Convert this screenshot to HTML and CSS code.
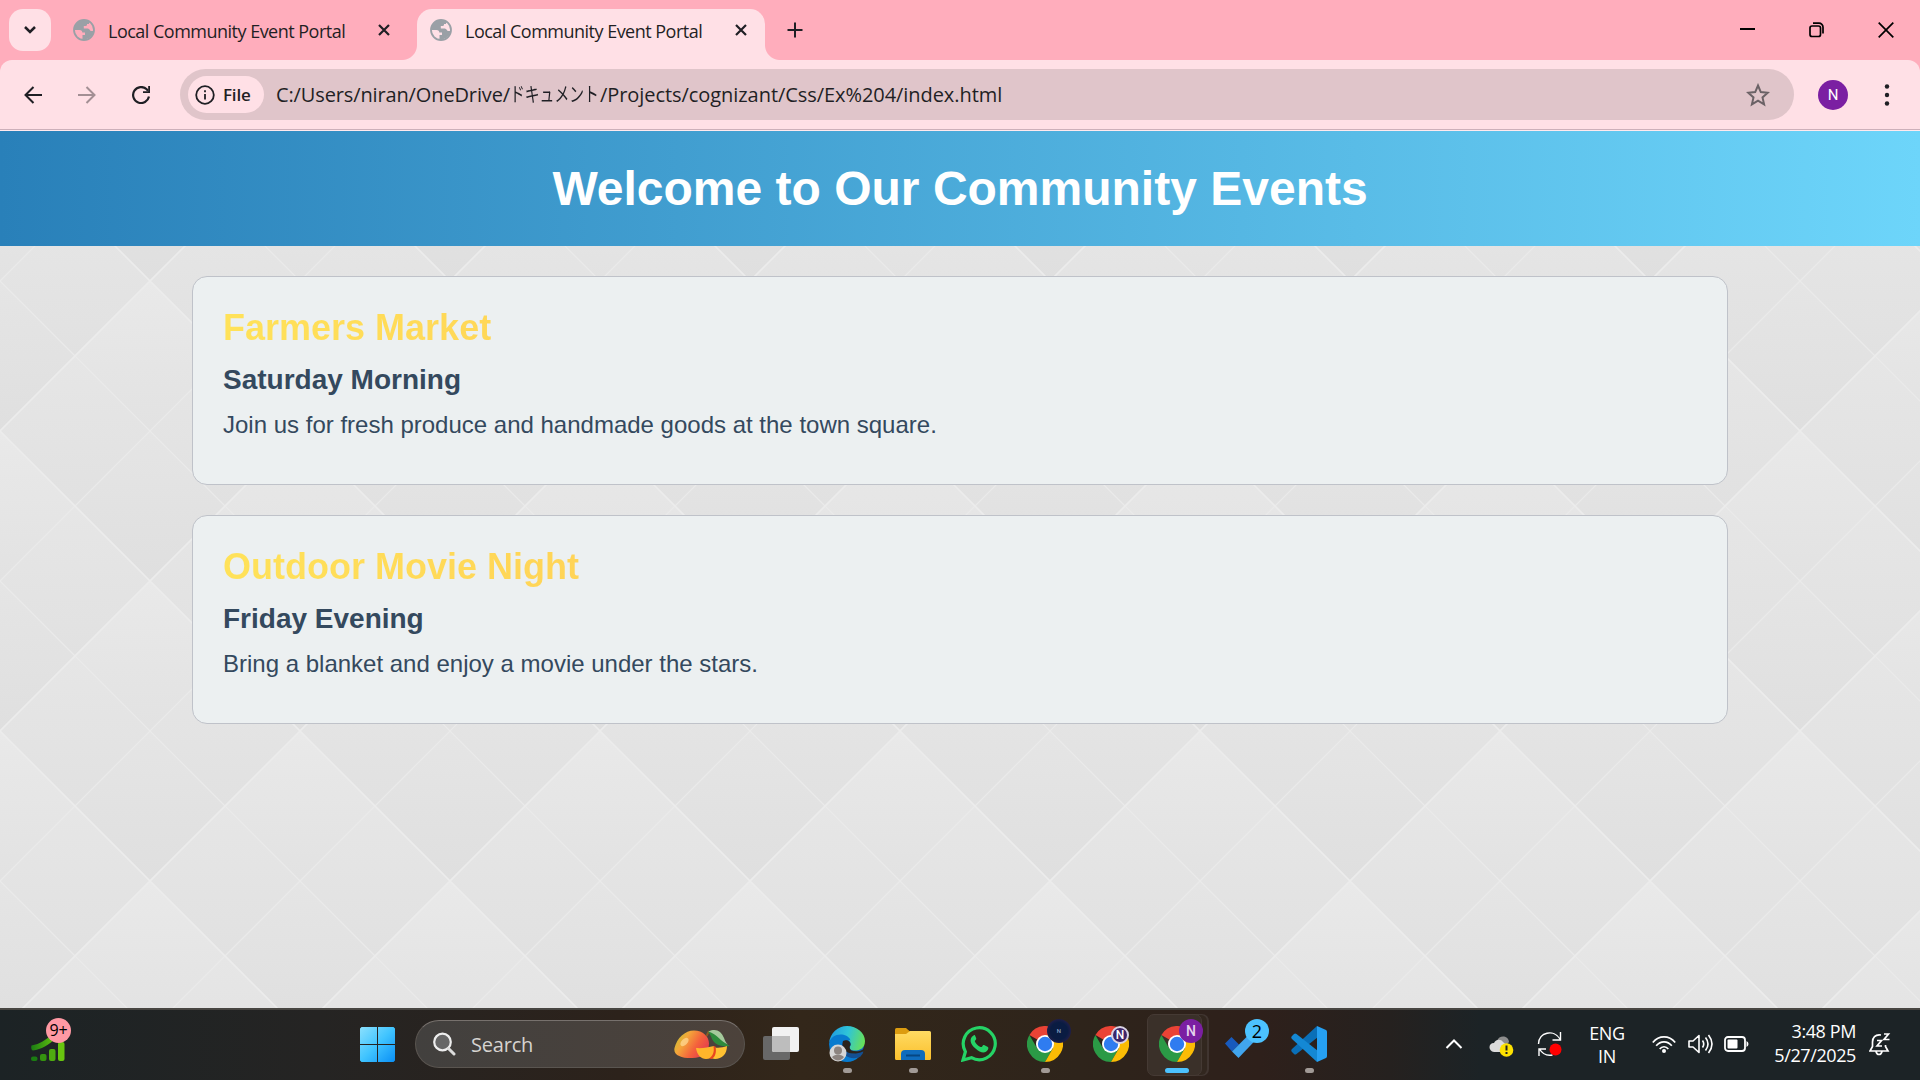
FILE: index.html
```html
<!DOCTYPE html>
<html lang="en">
<head>
<meta charset="utf-8">
<title>Local Community Event Portal</title>
<link rel="stylesheet" href="styles.css">
</head>
<body>
<svg class="defs" width="0" height="0" aria-hidden="true">
  <defs>
    <linearGradient id="win" x1="0" y1="0" x2="1" y2="1"><stop offset="0" stop-color="#8be0fd"/><stop offset=".5" stop-color="#40c4ff"/><stop offset="1" stop-color="#0a8ff5"/></linearGradient>
    <linearGradient id="bars" x1="0" x2="1"><stop offset="0" stop-color="#1b7d12"/><stop offset="1" stop-color="#66c410"/></linearGradient>
    <linearGradient id="mango" x1="0" y1=".2" x2="1" y2=".7"><stop offset="0" stop-color="#c2c133"/><stop offset=".3" stop-color="#f3a63a"/><stop offset=".65" stop-color="#f4603c"/><stop offset="1" stop-color="#e23a50"/></linearGradient>
    <linearGradient id="edgeTop" x1="0" y1=".3" x2="1" y2=".5"><stop offset="0" stop-color="#1f9ae0"/><stop offset=".5" stop-color="#2fc4d8"/><stop offset="1" stop-color="#67e05a"/></linearGradient>
    <linearGradient id="folder" x1="0" y1="0" x2="0" y2="1"><stop offset="0" stop-color="#ffdb63"/><stop offset="1" stop-color="#fbc02d"/></linearGradient>
    <symbol id="globe" viewBox="0 0 22 22">
      <circle cx="11" cy="11" r="10" fill="none" stroke="#9aa0a6" stroke-width="1.8"/>
      <path d="M13 1.5C7 .5 1.5 5 1.2 11h5.3c2 0 2.800 1 2.800 2.500H12V16H9.500v4.300C15 21 20 17 20.500 12h-2.700c-1 0-1-2.500-3-2.500h-4V7h1.700c1.500 0 1.500-1 1.500-2H16V2.500z" fill="#9aa0a6"/>
    </symbol>
    <symbol id="cross" viewBox="0 0 12 12"><path d="M1 1l10 10M11 1L1 11" fill="none" stroke="#1f1f24" stroke-width="2.200"/></symbol>
    <symbol id="chrome" viewBox="0 0 36 36">
      <path d="M18 18L2.400 9A18 18 0 0 1 33.600 9z" fill="#ea4335"/>
      <path d="M2.400 9A18 18 0 0 0 18 36l7.800-13.500L18 18 10.200 22.500z" fill="#2b9a46"/>
      <path d="M33.600 9A18 18 0 0 1 18 36l7.800-13.500L18 9z" fill="#fbbc05"/>
      <circle cx="18" cy="18" r="9" fill="#fff"/><circle cx="18" cy="18" r="7.200" fill="#2f7cf0"/>
    </symbol>
  </defs>
</svg>

<header class="tabstrip">
  <button class="tab-search"><svg width="14" height="10" viewBox="0 0 14 10"><path d="M2 2l5 5 5-5" fill="none" stroke="#1f1f24" stroke-width="2.500"/></svg></button>
  <div class="tab tab-first">
    <svg class="favicon"><use href="#globe"/></svg><span class="tab-title">Local Community Event Portal</span><svg class="tab-close"><use href="#cross"/></svg>
  </div>
  <div class="tab tab-active">
    <svg class="favicon"><use href="#globe"/></svg><span class="tab-title">Local Community Event Portal</span><svg class="tab-close"><use href="#cross"/></svg>
  </div>
  <svg class="new-tab" viewBox="0 0 16 16"><path d="M8 .5v15M.5 8h15" stroke="#1f1f24" stroke-width="2"/></svg>
  <div class="window-controls">
    <svg width="15" height="16" viewBox="0 0 15 16"><path d="M0 7h15" stroke="#000" stroke-width="2"/></svg>
    <svg width="15" height="16" viewBox="0 0 15 16"><rect x="1" y="4" width="10.500" height="10.500" rx="2" fill="none" stroke="#000" stroke-width="1.700"/><path d="M4 1.200h6a4 4 0 0 1 4 4v6.300" fill="none" stroke="#000" stroke-width="1.700"/></svg>
    <svg width="16" height="16" viewBox="0 0 16 16"><path d="M.7.7l14.600 14.600M15.300.7L.7 15.300" stroke="#000" stroke-width="1.700"/></svg>
  </div>
</header>

<div class="toolbar-back">
<nav class="toolbar">
  <div class="nav-buttons">
    <svg width="18" height="18" viewBox="0 0 18 18"><path d="M18 9H2M9.500 1L1.500 9l8 8" fill="none" stroke="#1f1f24" stroke-width="2"/></svg>
    <svg width="18" height="18" viewBox="0 0 18 18"><path d="M0 9h16M8.500 1l8 8-8 8" fill="none" stroke="#a38f94" stroke-width="2"/></svg>
    <svg width="18" height="18" viewBox="0 0 18 18"><path d="M17 10.500A8 8 0 1 1 14.700 3.300L16 4.700" fill="none" stroke="#1f1f24" stroke-width="2.200"/><path d="M18 0v7h-7V5.200h5.200V0z" fill="#1f1f24"/></svg>
  </div>
  <div class="omnibox">
    <div class="chip"><svg width="20" height="20" viewBox="0 0 20 20"><circle cx="10" cy="10" r="8.800" fill="none" stroke="#1f1f24" stroke-width="1.800"/><path d="M10 9v5.500M10 5.300v2" stroke="#1f1f24" stroke-width="1.800"/></svg><span>File</span></div>
    <div class="url"><span class="url-a">C:/Users/niran/OneDrive/</span><span class="kana"><span>ドキュメント</span></span><span class="url-b">/Projects/cognizant/Css/Ex%204/index.html</span></div>
    <svg class="star" width="24" height="24" viewBox="0 0 24 24"><path d="M12 2.500l2.800 6.600 7 .6-5.300 4.700 1.600 7L12 17.700l-6.100 3.700 1.600-7L2.200 9.700l7-.6z" fill="none" stroke="#6b6266" stroke-width="2"/></svg>
  </div>
  <span class="avatar">N</span>
  <svg class="menu" width="6" height="24" viewBox="0 0 6 24"><g fill="#1f1f24"><circle cx="3" cy="3.500" r="2.200"/><circle cx="3" cy="12" r="2.200"/><circle cx="3" cy="20.500" r="2.200"/></g></svg>
</nav>
</div>

<main class="page">
  <div class="banner"><h1>Welcome to Our Community Events</h1></div>
  <div class="events">
    <section class="card">
      <h2>Farmers Market</h2>
      <h3>Saturday Morning</h3>
      <p>Join us for fresh produce and handmade goods at the town square.</p>
    </section>
    <section class="card">
      <h2>Outdoor Movie Night</h2>
      <h3>Friday Evening</h3>
      <p>Bring a blanket and enjoy a movie under the stars.</p>
    </section>
  </div>
</main>

<footer class="taskbar">
  <div class="widget">
    <svg width="36" height="44" viewBox="0 0 36 44"><g fill="url(#bars)"><path d="M.5 27.500C9 26 15 22 20 17l5 3C18 27 10 31.500 2 32.500 0 32 0 28.500.5 27.500z"/><rect x="0" y="38.500" width="6.500" height="4.500" rx="2" fill="#1b7d12"/><rect x="9" y="36" width="6.500" height="7" rx="2" fill="#35930f"/><rect x="18" y="31" width="6.500" height="12" rx="2" fill="#4fab10"/><rect x="27" y="24" width="6.500" height="19" rx="2" fill="#68c50f"/></g></svg>
    <span class="count">9+</span>
  </div>
  <div class="apps">
    <svg class="start" width="35" height="35" viewBox="0 0 35 35"><path d="M1.500 0H17v17H0V1.500zM18 0h15.500L35 1.500V17H18zM0 18h17v17H1.500L0 33.500zM18 18h17v15.500L33.500 35H18z" fill="url(#win)"/></svg>
    <div class="search">
      <svg width="23" height="24" viewBox="0 0 23 24"><circle cx="9.500" cy="10" r="8.300" fill="#666" stroke="#eee" stroke-width="2.200"/><path d="M15.500 16.500l5.500 5.500" stroke="#ddd" stroke-width="3" stroke-linecap="round"/></svg>
      <span>Search</span>
      <svg class="mango" width="56" height="32" viewBox="0 0 56 32"><path d="M.5 19C3 9 11 1.500 20 1.500c9 0 15 6 15 13C35 24 28 29.500 17 29 7 29-1 26 .5 19z" fill="url(#mango)"/><ellipse cx="10.500" cy="13" rx="5" ry="3" transform="rotate(-45 10.500 13)" fill="#ffdc9a" opacity=".7"/><path d="M32.500 7l2.500-5" stroke="#8a5b25" stroke-width="2"/><path d="M34 3c9-4 14 1 16 7 1 4 3 6 6 7-9 1-15-1-18-7-1-3-2-5-4-7z" fill="#2e8b3c"/><path d="M34.500 2.500C42-1 47 2 50 9c1 3 2 5 4 6.500C47 13 43 5 34.500 2.500z" fill="#a5c99c"/><path d="M22 19c6 .5 12-.5 18-2 2 7-1 13-8 13-5 0-9-4-10-11z" fill="#ffb52b"/><path d="M41 18.500c4 .5 8 0 12-1.500 0 8-5 13-12 13l-5-1c4-3 5-6 5-10.500z" fill="#ffc132"/><path d="M39.500 17c1 6-.5 10-4.500 12.500l3 .5c4-3 4.500-8 3.500-12.500z" fill="#e9471f"/></svg>
    </div>
    <svg width="36" height="36" viewBox="0 0 36 36"><rect x="0" y="10" width="27" height="24" rx="2" fill="#686868"/><rect x="9" y="1" width="27" height="25" rx="2" fill="#f2f2f2"/><path d="M9 10h18v16H11q-2 0-2-2z" fill="#bdbdbd"/></svg>
    <div class="app running">
      <svg width="36" height="36" viewBox="0 0 36 36"><circle cx="18" cy="18" r="17" fill="#0d67ba"/><path d="M0 17C1 7 9 0 18 0c10 0 18 7 18 15 0 7-5 9.500-10 9.500-5 0-6-2-5-4 2-3 0-6-4-8C9 9 2 12 0 17z" fill="url(#edgeTop)"/><path d="M0 18C1 11 7 8 13 8.500c4 .5 8 3 8.500 6-6-2-10 3-8 9C16 31 24 32 30 31 21 40 6 36 1 25z" fill="#087bcf"/><path d="M15 15c-4 7 2 15 12 12 3-.7 6-2.500 7-2 1 1-1 4-3 6-8 3-17 0-18-8 0-3 0-6 2-8z" fill="#144f91"/><path d="M14 15c3-2 8 0 7.500 4-1.500 2-1 4 1 5.500 4 1.500 9 1 13-2l-1.500 3c-9 4-18 2-20-4-.7-2.500-.5-5 0-6.500z" fill="#2b231b"/><circle cx="9" cy="27" r="8.500" fill="#d6d6d6"/><circle cx="9" cy="24.500" r="4" fill="#8c8480"/><path d="M3 31c3-3.500 9-3.500 12 0-3 4.500-9 4.500-12 0z" fill="#8c8480"/></svg>
    </div>
    <div class="app running">
      <svg width="36" height="36" viewBox="0 0 36 36"><path d="M0 3.500Q0 2 1.500 2H11l4 3.500V9H0z" fill="#dc9c10"/><path d="M0 8h11l4-3h19.500Q36 5 36 6.500v26q0 1.500-1.500 1.500h-33Q0 34 0 32.500z" fill="url(#folder)"/><path d="M6 34v-6q0-4 4-4h16q4 0 4 4v6z" fill="#0f6cbd"/><path d="M11 29.500h14" stroke="#064682" stroke-width="2"/></svg>
    </div>
    <div class="app">
      <svg width="36" height="36" viewBox="0 0 36 36"><path d="M2 34l2.400-8.300A16 16 0 1 1 10.500 31.700z" fill="none" stroke="#25d366" stroke-width="3.200"/><path d="M12.500 9.500c-5 3-3 9 2 13 5 4.500 10 5.500 12.500 1 .7-1.500.4-2.300-.5-2.800l-3-1.500c-1-.4-1.500 0-2.300 1.300-.6.800-1.200.7-2.200.2-2.400-1.300-4-3-5-5-.3-.7 0-1 .6-1.700.8-1 .8-1.500.4-2.300l-1-2.200c-.4-.7-1-.6-1.500 0z" fill="#25d366"/></svg>
    </div>
    <div class="app running"><svg width="36" height="36"><use href="#chrome"/></svg><i class="badge badge-dark">N</i></div>
    <div class="app"><svg width="36" height="36"><use href="#chrome"/></svg><i class="badge badge-ring">N</i></div>
    <div class="app current"><svg width="36" height="36"><use href="#chrome"/></svg><i class="badge badge-purple">N</i></div>
    <div class="app">
      <svg width="36" height="36" viewBox="0 0 36 36"><path d="M0 17.500L6.500 11l7.500 7.500-7 7z" fill="#185abd"/><path d="M7 25.500L29 3.500l6 6L13.500 32z" fill="#41a5ee"/></svg><i class="badge badge-num">2</i>
    </div>
    <div class="app running">
      <svg width="36" height="36" viewBox="0 0 36 36"><path d="M26 0L1 23q-1.500 1.500 0 3l2 2q1 1 2.500 0L27 11z" fill="#0a6fb8"/><path d="M26 36L1 13q-1.500-1.500 0-3l2-2q1-1 2.500 0L27 25z" fill="#1488d4"/><path d="M26 0l9 4q1 .5 1 2v24q0 1.500-1 2l-9 4z" fill="#26a0f2"/></svg>
    </div>
  </div>
  <div class="tray">
    <svg class="chev" width="18" height="12" viewBox="0 0 18 12"><path d="M1.500 10L9 2.500l7.500 7.500" fill="none" stroke="#fff" stroke-width="2"/></svg>
    <svg class="cloud" width="26" height="24" viewBox="0 0 26 24"><path d="M8 8C10 2 19 2 20 9l-5 6z" fill="#8d8d8d"/><path d="M5 19c-6-1-6-9 0-9 2-4 7-4 9-1l5 4-6 6z" fill="#dcdcdc"/><circle cx="17.500" cy="17" r="6.800" fill="#fde100"/><path d="M17.500 12.500v5M17.500 19v2" stroke="#222" stroke-width="2"/></svg>
    <svg class="sync" width="26" height="26" viewBox="0 0 26 26"><path d="M1.500 13C1.500 1 17 -2 23 8M23.500 1v8h-8M2 25v-7h7M2.500 18c3 5 8 7 13 6" fill="none" stroke="#fff" stroke-width="1.400"/><circle cx="18.500" cy="18.500" r="6" fill="#f00"/></svg>
    <div class="lang"><span>ENG</span><span>IN</span></div>
    <svg class="wifi" width="24" height="19" viewBox="0 0 24 19"><g fill="none" stroke="#fff" stroke-width="1.700"><path d="M.8 7.500C7 0 17 0 23.200 7.500M4.200 10.800c4.300-5.300 11.300-5.300 15.600 0M7.700 14c2.300-3 6.300-3 8.600 0"/></g><circle cx="12" cy="16" r="2" fill="#fff"/></svg>
    <svg class="volume" width="25" height="20" viewBox="0 0 25 20"><g fill="none" stroke="#fff" stroke-width="1.600" stroke-linejoin="round"><path d="M1 7v6h4l6 5.500V1.500L5 7zM14.500 6.500q2.500 3.500 0 7M17.500 3.500q5 6.500 0 13M20.500 1q7 9 0 18"/></g></svg>
    <svg class="battery" width="25" height="16" viewBox="0 0 25 16"><rect x="1" y="1" width="20" height="14" rx="3" fill="none" stroke="#fff" stroke-width="1.800"/><rect x="3.500" y="3.500" width="10" height="9" rx="1" fill="#fff"/><path d="M22.500 5v6q2-1 2-3t-2-3z" fill="#fff"/></svg>
    <div class="clock"><span>3:48 PM</span><span>5/27/2025</span></div>
    <svg class="bell" width="22" height="24" viewBox="0 0 22 24"><g fill="none" stroke="#fff" stroke-width="1.700"><path d="M12 3C6 2 3.500 6 3.500 10v4.500L1 19h18l-2.500-4.500V13M7 19.500c1 4 5 4 6 0"/><path d="M8 8.500h4.500L8 14h5M15 2h4.500L15 7.500h5.500"/></g></svg>
  </div>
</footer>
</body>
</html>
```
FILE: styles.css
```css
* { box-sizing: border-box; }
body {
  margin: 0;
  width: 1920px;
  height: 1080px;
  overflow: hidden;
  display: flex;
  flex-direction: column;
  font-family: "Open Sans", "Noto Sans CJK JP", sans-serif;
  color: #1f1f24;
}
svg { display: block; flex: none; }
.defs { position: absolute; }

/* Tab strip */
.tabstrip {
  height: 60px;
  flex: none;
  display: flex;
  align-items: flex-start;
  background: #ffadbc;
  padding: 9px 26px 0 9px;
}
.tab-search {
  width: 42px;
  height: 42px;
  border: 0;
  padding: 0;
  border-radius: 14px;
  background: #ffe0e6;
  display: grid;
  place-items: center;
}
.tab { height: 51px; display: flex; align-items: flex-start; padding-top: 10px; flex: none; }
.tab-first { width: 366px; padding-left: 22px; }
.tab-active {
  position: relative;
  width: 348px;
  padding-left: 13px;
  background: #ffe0e6;
  border-radius: 15px 15px 0 0;
}
.tab-active::before, .tab-active::after {
  content: "";
  position: absolute;
  bottom: 0;
  width: 15px;
  height: 15px;
}
.tab-active::before { right: 100%; background: radial-gradient(circle at 0 0, #ffadbc 14.500px, #ffe0e6 15.500px); }
.tab-active::after { left: 100%; background: radial-gradient(circle at 100% 0, #ffadbc 14.500px, #ffe0e6 15.500px); }
.favicon { width: 22px; height: 22px; }
.tab-title {
  width: 270px;
  margin-left: 13px;
  line-height: 24px;
  font-size: 18px;
  letter-spacing: -.51px;
  white-space: nowrap;
}
.tab-close { width: 12px; height: 12px; margin-top: 5px; }
.new-tab { width: 16px; height: 16px; margin: 13px 0 0 22px; }
.window-controls { display: flex; gap: 54px; margin: 13px 0 0 auto; }

/* Toolbar */
.toolbar-back { background: #ffadbc; flex: none; }
.toolbar {
  height: 71px;
  display: flex;
  align-items: center;
  padding: 0 0 2px 24px;
  background: linear-gradient(#ffe0e6 69px, #cdb0ba 69px, #cdb0ba 70px, #ffe9ee 70px);
  border-radius: 12px 12px 0 0;
}
.nav-buttons { display: flex; gap: 36px; width: 156px; flex: none; }
.omnibox {
  width: 1614px;
  height: 51px;
  flex: none;
  border-radius: 26px;
  background: #e0c5ca;
  display: flex;
  align-items: center;
  padding: 0 24px 0 8px;
}
.chip {
  width: 76px;
  height: 37px;
  border-radius: 19px;
  background: #ffe0e6;
  display: flex;
  align-items: center;
  gap: 8px;
  padding-left: 7px;
  font-size: 17px;
  font-weight: 600;
  letter-spacing: -.2px;
}
.url { display: flex; margin-left: 12px; font-size: 20px; line-height: 28px; white-space: nowrap; }
.url-a { letter-spacing: -.13px; }
.url-b { letter-spacing: -.06px; }
.kana { width: 90px; }
.kana span { display: inline-block; transform: scaleX(.74); transform-origin: 0 50%; }
.star { margin-left: auto; }
.avatar {
  width: 30px;
  height: 30px;
  flex: none;
  margin: 0 36px 0 24px;
  border-radius: 50%;
  background: #7b1fa2;
  color: #fff;
  font: 15px/30px Roboto, sans-serif;
  text-align: center;
}

/* Web page */
.page {
  height: 877px;
  flex: none;
  font-family: "Liberation Sans", Arial, sans-serif;
  background: #e4e4e4 url("data:image/svg+xml,%3Csvg xmlns='http://www.w3.org/2000/svg' xmlns:xlink='http://www.w3.org/1999/xlink' width='300' height='300'%3E%3Cdefs%3E%3ClinearGradient id='a' x2='0' y2='1'%3E%3Cstop offset='0' stop-color='%23e9e9e9'/%3E%3Cstop offset='1' stop-color='%23e2e2e2'/%3E%3C/linearGradient%3E%3ClinearGradient id='b' x2='0' y2='1'%3E%3Cstop offset='0' stop-color='%23e6e6e6'/%3E%3Cstop offset='1' stop-color='%23e1e1e1'/%3E%3C/linearGradient%3E%3ClinearGradient id='c' x2='0' y2='1'%3E%3Cstop offset='0' stop-color='%23e5e5e5'/%3E%3Cstop offset='1' stop-color='%23dfdfdf'/%3E%3C/linearGradient%3E%3Cpath id='s' d='M0 0L75 75 0 150-75 75z'/%3E%3Cg id='d'%3E%3Cuse xlink:href='%23s' fill='url(%23a)'/%3E%3Cuse xlink:href='%23s' x='-75' y='75' fill='url(%23b)'/%3E%3Cuse xlink:href='%23s' x='75' y='75' fill='url(%23b)'/%3E%3Cuse xlink:href='%23s' y='150' fill='url(%23c)'/%3E%3C/g%3E%3C/defs%3E%3Cuse xlink:href='%23d'/%3E%3Cuse xlink:href='%23d' x='300'/%3E%3Cuse xlink:href='%23d' x='150' y='-150'/%3E%3Cuse xlink:href='%23d' x='150' y='150'/%3E%3Cg fill='none'%3E%3Cpath d='M75-75L375 225M-75 75L225 375M-75 225L225-75M75 375L375 75' stroke='%23eaeaea' stroke-width='1.3'/%3E%3Cpath d='M-9-9L309 309M309-9L-9 309' stroke='%23ececec' stroke-width='1.6'/%3E%3C/g%3E%3C/svg%3E");
}
.banner {
  height: 115px;
  display: flex;
  justify-content: center;
  padding-top: 30px;
  background: linear-gradient(90deg, #2980b9, #6dd5fa);
}
h1, h2, h3, p { margin: 0; }
h1 { font-size: 48px; line-height: 55px; color: #fff; }
.events { width: 80%; margin: 30px auto 0; display: flex; flex-direction: column; gap: 30px; }
.card {
  height: 209px;
  padding: 30px;
  border: 1px solid #bfc2c9;
  border-radius: 15px;
  background: rgba(236, 240, 241, .95);
  color: #34495e;
}
h2 {
  font-size: 36px;
  line-height: 41px;
  background: linear-gradient(90deg, #ffe259, #ffa751);
  background-clip: text;
  -webkit-background-clip: text;
  color: transparent;
}
h3 { font-size: 28px; line-height: 32px; margin-top: 16px; }
p { font-size: 24px; line-height: 28px; margin-top: 15px; }

/* Taskbar */
.taskbar {
  height: 72px;
  flex: none;
  display: flex;
  border-top: 2px solid #484642;
  background: linear-gradient(90deg, #1c2325 0, #252423 320px, #2c221b 620px, #33271a 800px, #2e241b 1080px, #2e201b 1260px, #25211f 1390px, #1c2326 1480px);
  color: #fff;
}
.widget { position: relative; width: 360px; padding: 8px 0 0 31px; }
.count {
  position: absolute;
  left: 46px;
  top: 8px;
  width: 25px;
  height: 25px;
  border-radius: 50%;
  background: #ff99a4;
  color: #000;
  font-size: 16px;
  line-height: 24px;
  text-align: center;
  letter-spacing: -.2px;
}
.apps { display: flex; gap: 30px; padding-top: 16px; }
.start { margin: 1px -10px 0 0; }
.search {
  width: 330px;
  height: 48px;
  margin: -6px -12px 0 0;
  border-radius: 24px;
  border: 1px solid #5a5550;
  border-top-color: #77716d;
  background: linear-gradient(90deg, #42403e, #4c423b);
  display: flex;
  align-items: center;
  padding: 0 14px 0 17px;
  font-size: 20px;
  letter-spacing: -.2px;
  color: #d6d3d0;
}
.search span { margin-left: 15px; }
.mango { margin-left: auto; margin-top: 2px; }
.app { position: relative; width: 36px; height: 36px; }
.app > svg { position: relative; }
.running::after, .current::after {
  content: "";
  position: absolute;
  left: 14px;
  top: 42px;
  width: 9px;
  height: 5px;
  border-radius: 3px;
  background: #a19a96;
}
.current::after { left: 6px; width: 24px; background: #4cc2ff; }
.current::before {
  content: "";
  position: absolute;
  left: -12px;
  top: -12px;
  width: 53px;
  height: 60px;
  border-radius: 7px;
  border: 1px solid #453a34;
  background: #3a3029;
  box-shadow: 6px 0 0 -1px #32271f, 7px 0 0 0 #403530;
}
.badge {
  position: absolute;
  width: 24px;
  height: 24px;
  border-radius: 50%;
  left: 20px;
  top: -7px;
  font: 500 14px/24px Roboto, sans-serif;
  text-align: center;
}
.badge-dark { background: radial-gradient(circle, #0a1c42 50%, #33204f 90%); font-size: 6px; color: #8ca3c2; }
.badge-ring { left: 18px; top: 0; width: 18px; height: 18px; border: 2px solid #d9d3e4; background: #3c2569; font-size: 12px; line-height: 14px; }
.badge-purple { background: #7b1fa2; color: #e6d3ee; }
.badge-num { background: #4cc2ff; color: #000; font: 18px/24px "Open Sans", sans-serif; }

/* System tray */
.tray { display: flex; margin-left: auto; align-items: flex-start; padding-right: 29px; }
.chev { margin: 28px 26px 0 0; }
.cloud { margin: 23px 22px 0 0; }
.sync { margin: 21px 21px 0 0; }
.lang, .clock { display: flex; flex-direction: column; font-size: 18px; line-height: 24px; letter-spacing: -.4px; white-space: nowrap; }
.lang { width: 46px; align-items: center; line-height: 23px; margin: 12px 22px 0 0; }
.wifi { margin: 25px 12px 0 0; }
.volume { margin: 24px 11px 0 0; }
.battery { margin-top: 26px; }
.clock { width: 107px; align-items: flex-end; margin: 9px 13px 0 0; }
.bell { margin-top: 22px; }
```
